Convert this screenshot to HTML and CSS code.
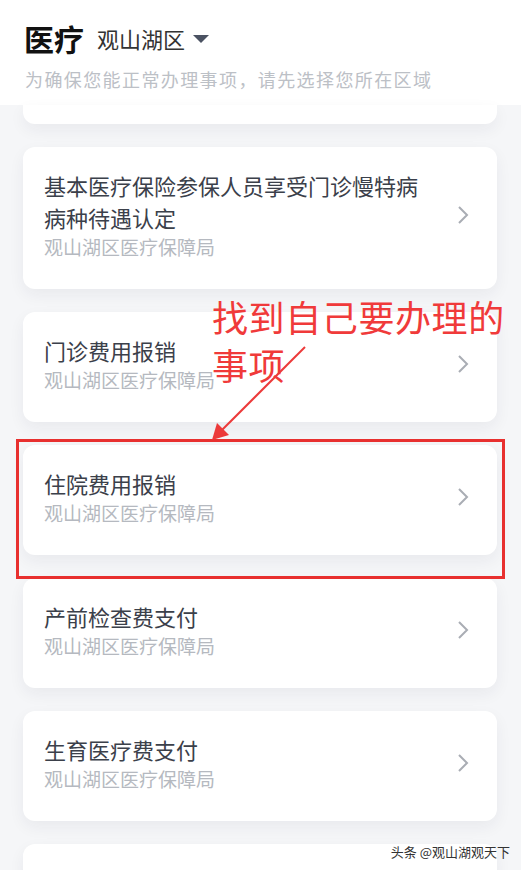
FILE: index.html
```html
<!DOCTYPE html>
<html lang="zh-CN">
<head>
    <meta charset="UTF-8">
    <meta name="viewport" content="width=device-width, initial-scale=1.0">
    <title>医疗 - 观山湖区</title>
    <link rel="stylesheet" href="styles.css">
</head>
<body>

    <div class="header">
        <div class="title-row">
            <span class="title">医疗</span>
            <span class="region">观山湖区</span>
            <span class="caret"></span>
        </div>
        <p class="hint">为确保您能正常办理事项，请先选择您所在区域</p>
    </div>

    <div class="list">
        <div class="card card-cut"></div>

        <div class="card">
            <div class="info">
                <div class="name">基本医疗保险参保人员享受门诊慢特病病种待遇认定</div>
                <div class="dept">观山湖区医疗保障局</div>
            </div>
            <svg class="chevron" width="14" height="20" viewBox="0 0 14 20"><path d="M3 2l8 8-8 8" fill="none" stroke="#a9adb4" stroke-width="2"/></svg>
        </div>

        <div class="card">
            <div class="info">
                <div class="name">门诊费用报销</div>
                <div class="dept">观山湖区医疗保障局</div>
            </div>
            <svg class="chevron" width="14" height="20" viewBox="0 0 14 20"><path d="M3 2l8 8-8 8" fill="none" stroke="#a9adb4" stroke-width="2"/></svg>
        </div>

        <div class="card">
            <div class="info">
                <div class="name">住院费用报销</div>
                <div class="dept">观山湖区医疗保障局</div>
            </div>
            <svg class="chevron" width="14" height="20" viewBox="0 0 14 20"><path d="M3 2l8 8-8 8" fill="none" stroke="#a9adb4" stroke-width="2"/></svg>
        </div>

        <div class="card">
            <div class="info">
                <div class="name">产前检查费支付</div>
                <div class="dept">观山湖区医疗保障局</div>
            </div>
            <svg class="chevron" width="14" height="20" viewBox="0 0 14 20"><path d="M3 2l8 8-8 8" fill="none" stroke="#a9adb4" stroke-width="2"/></svg>
        </div>

        <div class="card">
            <div class="info">
                <div class="name">生育医疗费支付</div>
                <div class="dept">观山湖区医疗保障局</div>
            </div>
            <svg class="chevron" width="14" height="20" viewBox="0 0 14 20"><path d="M3 2l8 8-8 8" fill="none" stroke="#a9adb4" stroke-width="2"/></svg>
        </div>

        <div class="card card-last"></div>
    </div>

    <!-- annotation drawn over the screenshot -->
    <div class="note">找到自己要办理的<br>事项</div>
    <div class="highlight"></div>
    <svg class="arrow" width="521" height="870" viewBox="0 0 521 870">
        <line x1="305" y1="347" x2="217" y2="435" stroke="#ec3a3a" stroke-width="2"/>
        <polygon points="212,440 217,423 229,435" fill="#ec3a3a"/>
    </svg>

    <div class="watermark">头条 @观山湖观天下</div>

</body>
</html>
```

FILE: styles.css
```css
html, body {
    height: 100%;
}
body {
    margin: 0;
    background-color: #f5f6f8;
    font-family: "Noto Sans CJK SC", "Noto Sans", sans-serif;
    position: relative;
    overflow: hidden;
}
.header {
    background-color: #fff;
    height: 105px;
    padding: 0 24px;
    box-sizing: border-box;
}
.title-row {
    display: flex;
    align-items: center;
    padding-top: 19px;
    height: 38px;
}
.title {
    font-size: 30px;
    font-weight: bold;
    color: #111;
}
.region {
    font-size: 22px;
    color: #333;
    margin-left: 13px;
}
.caret {
    width: 0;
    height: 0;
    border-left: 8px solid transparent;
    border-right: 8px solid transparent;
    border-top: 8px solid #4b5262;
    margin-left: 8px;
    margin-top: 2px;
}
.hint {
    margin: 9px 0 0 1px;
    font-size: 18px;
    letter-spacing: 1.4px;
    color: #bcc0c6;
}
.list {
    display: flex;
    flex-direction: column;
    gap: 23px;
    padding: 0 24px 0 23px;
}
.card {
    background-color: #fff;
    border-radius: 12px;
    box-shadow: 0 6px 16px rgba(30, 40, 60, 0.06);
    display: flex;
    align-items: center;
    justify-content: space-between;
    padding: 22px 27px 28px 21px;
}
.card-cut {
    height: 19px;
    padding: 0;
    border-radius: 0 0 12px 12px;
}
.card-last {
    height: 60px;
    padding: 0;
}
.info {
    flex: 1;
    padding-right: 28px;
}
.name {
    font-size: 22px;
    line-height: 32px;
    color: #3b404a;
}
.dept {
    font-size: 19px;
    line-height: 28px;
    color: #b5b9c0;
}
.chevron {
    flex-shrink: 0;
}
.note {
    position: absolute;
    left: 212px;
    top: 292px;
    font-size: 36px;
    letter-spacing: 0.6px;
    line-height: 48px;
    color: #f03a3a;
}
.highlight {
    position: absolute;
    left: 16px;
    top: 439px;
    width: 483px;
    height: 134px;
    border: 3px solid #e8302f;
}
.arrow {
    position: absolute;
    left: 0;
    top: 0;
    pointer-events: none;
}
.watermark {
    position: absolute;
    right: 11px;
    top: 842px;
    font-size: 13px;
    color: #333;
}
```
